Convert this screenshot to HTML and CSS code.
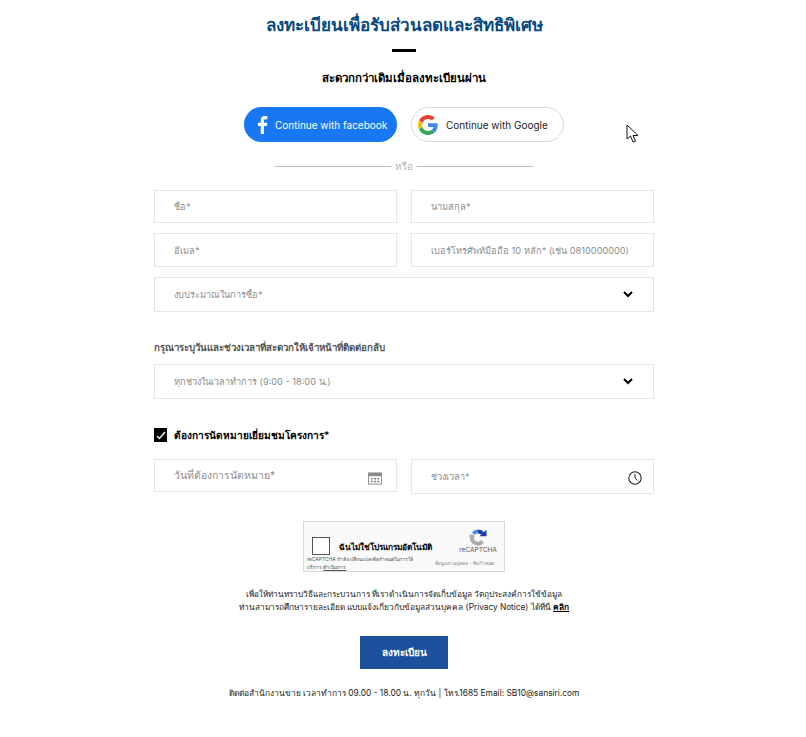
FILE: index.html
```html
<!DOCTYPE html>
<html lang="th">
<head>
    <meta charset="UTF-8">
    <meta name="viewport" content="width=device-width, initial-scale=1.0">
    <title>ลงทะเบียน</title>
    <link rel="stylesheet" href="styles.css">
</head>
<body>
    <div class="container">
        <h1>ลงทะเบียนเพื่อรับส่วนลดและสิทธิพิเศษ</h1>
        <div class="title-bar"></div>
        <h2>สะดวกกว่าเดิมเมื่อลงทะเบียนผ่าน</h2>

        <div class="social">
            <a class="social-btn facebook">
                <svg width="11" height="18" viewBox="0 0 11 18"><path fill="#fff" d="M7 18V10h2.800l.5-3.200H7V4.900c0-1 .4-1.700 1.800-1.700h1.600V.3C10 .2 9 0 7.900 0 5.400 0 3.700 1.500 3.700 4.300v2.500H.9V10h2.800v8z"/></svg>
                <span>Continue with facebook</span>
            </a>
            <a class="social-btn google">
                <svg width="20" height="20" viewBox="0 0 48 48">
                    <path fill="#EA4335" d="M24 9.500c3.500 0 6.700 1.200 9.200 3.600l6.900-6.900C35.900 2.400 30.500 0 24 0 14.600 0 6.500 5.400 2.600 13.200l8 6.200C12.500 13.600 17.800 9.500 24 9.500z"/>
                    <path fill="#4285F4" d="M47 24.500c0-1.600-.1-3.100-.4-4.500H24v9h12.900c-.6 3-2.200 5.500-4.700 7.200l7.700 6c4.500-4.200 7.100-10.300 7.100-17.700z"/>
                    <path fill="#FBBC05" d="M10.600 28.600c-.5-1.400-.8-3-.8-4.600s.3-3.200.8-4.600l-8-6.200C.9 16.500 0 20.100 0 24s.9 7.500 2.600 10.800z"/>
                    <path fill="#34A853" d="M24 48c6.500 0 11.900-2.100 15.900-5.800l-7.700-6c-2.200 1.400-4.900 2.300-8.200 2.300-6.200 0-11.500-4.100-13.400-9.900l-8 6.200C6.500 42.600 14.600 48 24 48z"/>
                </svg>
                <span>Continue with Google</span>
            </a>
        </div>

        <div class="divider"><span>หรือ</span></div>

        <form>
            <div class="row">
                <input class="field h33" type="text" placeholder="ชื่อ*">
                <input class="field h33" type="text" placeholder="นามสกุล*">
            </div>
            <div class="row">
                <input class="field" type="text" placeholder="อีเมล*">
                <input class="field" type="tel" placeholder="เบอร์โทรศัพท์มือถือ 10 หลัก* (เช่น 0810000000)">
            </div>
            <div class="select-box">
                <select class="field"><option>งบประมาณในการซื้อ*</option></select>
                <svg class="chevron" width="10" height="7" viewBox="0 0 10 7"><path fill="none" stroke="#000" stroke-width="2" d="M1 1l4 4 4-4"/></svg>
            </div>

            <label class="time-label">กรุณาระบุวันและช่วงเวลาที่สะดวกให้เจ้าหน้าที่ติดต่อกลับ</label>
            <div class="select-box">
                <select class="field"><option>ทุกช่วงในเวลาทำการ (9:00 - 18:00 น.)</option></select>
                <svg class="chevron" width="10" height="7" viewBox="0 0 10 7"><path fill="none" stroke="#000" stroke-width="2" d="M1 1l4 4 4-4"/></svg>
            </div>

            <label class="appoint">
                <span class="checkbox">
                    <svg width="10" height="9" viewBox="0 0 10 9"><path fill="none" stroke="#fff" stroke-width="1.300" d="M1 5l2.500 2.500L9 1"/></svg>
                </span>
                ต้องการนัดหมายเยี่ยมชมโครงการ*
            </label>

            <div class="row row-date">
                <div class="icon-field date">
                    <input class="field big" type="text" placeholder="วันที่ต้องการนัดหมาย*">
                    <svg class="field-icon" width="14" height="13" viewBox="0 0 15 13">
                        <rect width="15" height="13" fill="#8a8a8a"/>
                        <rect x="1" y="4" width="13" height="8" fill="#fff"/>
                        <path fill="#777" d="M3 6h2v1.500H3zM6.500 6h2v1.500h-2zM10 6h2v1.500h-2zM3 9h2v1.500H3zM6.500 9h2v1.500h-2zM10 9h2v1.500h-2z"/>
                    </svg>
                </div>
                <div class="icon-field time">
                    <input class="field" type="text" placeholder="ช่วงเวลา*">
                    <svg class="field-icon" width="14" height="14" viewBox="0 0 14 14"><circle cx="7" cy="7" r="6.200" fill="none" stroke="#222" stroke-width="1.100"/><path fill="none" stroke="#222" d="M7 3v4l2.500 2.500"/></svg>
                </div>
            </div>

            <div class="recaptcha">
                <div class="rc-main">
                    <span class="rc-box"></span>
                    <span class="rc-label">ฉันไม่ใช่โปรแกรมอัตโนมัติ</span>
                </div>
                <div class="rc-logo">
                    <svg width="22" height="22" viewBox="0 0 22 22" fill="none" stroke-width="5">
                        <path stroke="#ababab" d="M3 7v4a8 8 0 0 0 14 5.300"/>
                        <path stroke="#4a90e2" d="M5 6a8 8 0 0 1 6-3"/>
                        <path stroke="#1c3aa9" d="M11 3a8 8 0 0 1 6 3"/>
                        <path fill="#1c3aa9" stroke="none" d="M13 9.500h9V1z"/>
                        <path fill="#ababab" stroke="none" d="M0 8.500h6.500V11H0z"/>
                    </svg>
                    <span class="rc-brand">reCAPTCHA</span>
                </div>
                <p class="rc-note">reCAPTCHA กำลังเปลี่ยนแปลงข้อกำหนดในการให้<br>บริการ <u>ดำเนินการ</u></p>
                <p class="rc-terms">ข้อมูลส่วนบุคคล - ข้อกำหนด</p>
            </div>

            <p class="privacy">เพื่อให้ท่านทราบวิธีและกระบวนการ ที่เราดำเนินการจัดเก็บข้อมูล วัตถุประสงค์การใช้ข้อมูล<br>ท่านสามารถศึกษารายละเอียด แบบแจ้งเกี่ยวกับข้อมูลส่วนบุคคล (Privacy Notice) ได้ที่นี่ <a href="#">คลิก</a></p>

            <button type="submit">ลงทะเบียน</button>
        </form>

        <p class="contact">ติดต่อสำนักงานขาย เวลาทำการ 09.00 - 18.00 น. ทุกวัน | โทร.1685 Email: SB10@sansiri.com</p>
    </div>

    <svg class="cursor" width="14" height="20" viewBox="0 0 14 20"><path fill="#fff" stroke="#111" d="M1 1v14l3.500-3 2.500 6 2.500-1-2.500-5.500H12z"/></svg>
</body>
</html>
```

FILE: styles.css
```css
* {
    box-sizing: border-box;
}

body {
    margin: 0;
    font-family: 'Inter', 'Noto Sans', 'Noto Sans CJK SC', sans-serif;
    background-color: #fff;
    color: #000;
    position: relative;
    min-height: 737px;
}

.container {
    width: 500px;
    margin-left: 154px;
    padding-top: 12px;
}

h1 {
    margin: 0;
    text-align: center;
    font-size: 17px;
    line-height: 26px;
    font-weight: 600;
    color: #05487f;
}

.title-bar {
    width: 24px;
    height: 3px;
    background: #000;
    margin: 11px auto 0;
}

h2 {
    margin: 16px 0 0;
    text-align: center;
    font-size: 11.500px;
    line-height: 20px;
    font-weight: 600;
}

.social {
    display: flex;
    justify-content: center;
    gap: 14px;
    margin-top: 19px;
}

.social-btn {
    width: 153px;
    height: 35px;
    border-radius: 18px;
    display: flex;
    align-items: center;
    font-size: 10px;
}

.facebook {
    background: #1877f2;
    color: #fff;
    padding-left: 13px;
    gap: 7px;
}

.google {
    background: #fff;
    border: 1px solid #d8d8d8;
    color: #222;
    padding-left: 6px;
    gap: 8px;
}

.divider {
    width: 258px;
    margin: 16px auto 0;
    display: flex;
    align-items: center;
    gap: 4px;
    font-size: 10px;
    line-height: 16px;
    color: #b4b4b4;
}

.divider::before,
.divider::after {
    content: "";
    flex: 1;
    height: 1px;
    background: #bdbdbd;
}

form {
    margin-top: 16px;
}

.row {
    display: flex;
    gap: 14px;
    margin-bottom: 10px;
}

.field {
    display: block;
    width: 100%;
    height: 34px;
    border: 1px solid #e6e6e6;
    border-radius: 0;
    background: #fff;
    padding: 0 19px;
    font-family: inherit;
    font-size: 9.200px;
    color: #8c8c8c;
    outline: none;
    appearance: none;
}

.field::placeholder {
    color: #8c8c8c;
    opacity: 1;
}

.h33 {
    height: 33px;
}

.row > .field,
.icon-field {
    flex: 1;
    min-width: 0;
}

.select-box {
    position: relative;
}

.select-box .field {
    height: 35px;
}

.chevron {
    position: absolute;
    right: 21px;
    top: 14px;
}

.time-label {
    display: block;
    margin: 27px 0 7px;
    font-size: 9.700px;
    line-height: 18px;
    font-weight: 600;
    color: #555;
}

.appoint {
    display: flex;
    align-items: center;
    gap: 7px;
    margin: 27px 0 15px;
    font-size: 10.100px;
    line-height: 18px;
    font-weight: 600;
}

.checkbox {
    width: 13px;
    height: 14px;
    background: #000;
    display: flex;
    align-items: center;
    justify-content: center;
}

.row-date {
    align-items: flex-start;
    margin-bottom: 27px;
}

.icon-field {
    position: relative;
}

.date .field {
    height: 33px;
}

.time .field {
    height: 35px;
}

.field.big {
    font-size: 10.400px;
}

.field-icon {
    position: absolute;
    right: 15px;
    top: 13px;
}

.time .field-icon {
    right: 12px;
    top: 12px;
}

.recaptcha {
    width: 202px;
    height: 51px;
    margin: 0 auto;
    background: #f9f9f9;
    border: 1px solid #d8d8d8;
    display: grid;
    grid-template-columns: 131px 69px;
    grid-template-rows: 33px 1fr;
    overflow: hidden;
}

.rc-main {
    display: flex;
    align-items: flex-end;
    gap: 9px;
    padding-left: 8px;
    min-width: 0;
}

.rc-box {
    width: 18px;
    height: 18px;
    background: #fff;
    border: 1px solid #555;
    flex: none;
}

.rc-label {
    font-size: 8.300px;
    line-height: 14px;
    font-weight: 600;
    white-space: nowrap;
    padding-bottom: 1px;
}

.rc-logo {
    display: flex;
    flex-direction: column;
    align-items: center;
    padding: 7px 0 0 17px;
}

.rc-brand {
    font-size: 6.500px;
    line-height: 9px;
    color: #555;
    margin-top: 0;
    white-space: nowrap;
}

.rc-note {
    margin: 0;
    padding-left: 3px;
    font-size: 5px;
    line-height: 8px;
    color: #555;
    white-space: nowrap;
}

.rc-terms {
    margin: 5px 0 0;
    font-size: 4.500px;
    line-height: 8px;
    color: #777;
    white-space: nowrap;
}

.privacy {
    margin: 16px 0 0;
    text-align: center;
    font-size: 8.280px;
    line-height: 13px;
    color: #222;
}

.privacy a {
    color: #000;
    font-weight: 700;
}

button {
    display: block;
    width: 88px;
    height: 33px;
    margin: 22px auto 0;
    border: none;
    background: #1c4f9c;
    color: #fff;
    font-family: inherit;
    font-size: 10px;
    font-weight: 700;
}

.contact {
    margin: 17px 0 0;
    text-align: center;
    font-size: 8.400px;
    line-height: 14px;
    color: #222;
}

.cursor {
    position: absolute;
    left: 626px;
    top: 124px;
}
```
